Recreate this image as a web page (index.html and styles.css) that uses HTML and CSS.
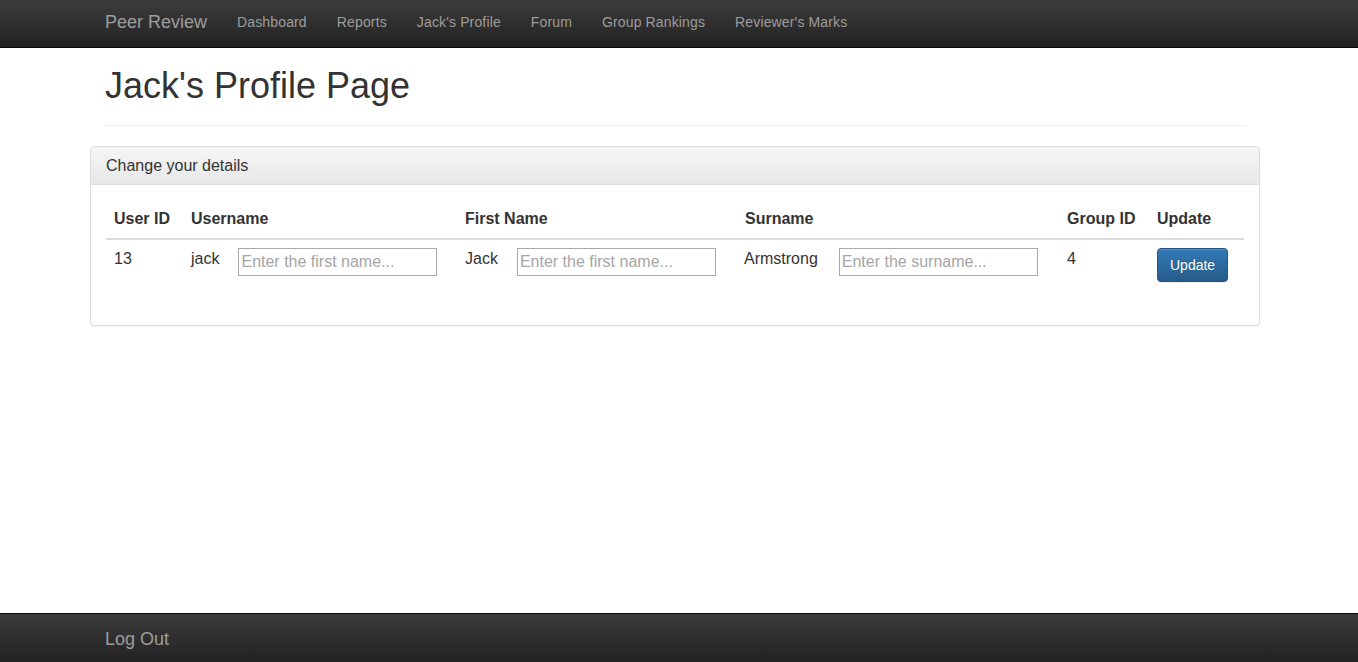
FILE: index.html
```html
<!DOCTYPE html>
<html lang="en">
<head>
<meta charset="utf-8">
<title>Jack's Profile Page</title>
<link rel="stylesheet" href="styles.css">
</head>
<body>
<nav class="navbar">
  <div class="nav-inner">
    <a class="brand" href="#">Peer Review</a>
    <ul class="nav-links">
      <li><a href="#">Dashboard</a></li>
      <li><a href="#">Reports</a></li>
      <li><a href="#">Jack's Profile</a></li>
      <li><a href="#">Forum</a></li>
      <li><a href="#">Group Rankings</a></li>
      <li><a href="#">Reviewer's Marks</a></li>
    </ul>
  </div>
</nav>

<main class="container">
  <div class="page-header">
    <h1>Jack's Profile Page</h1>
  </div>

  <section class="panel">
    <div class="panel-heading">Change your details</div>
    <div class="panel-body">
      <table class="table">
        <colgroup>
          <col class="c-id">
          <col class="c-user">
          <col class="c-first">
          <col class="c-sur">
          <col class="c-group">
          <col class="c-upd">
        </colgroup>
        <thead>
          <tr>
            <th>User ID</th>
            <th>Username</th>
            <th>First Name</th>
            <th>Surname</th>
            <th>Group ID</th>
            <th>Update</th>
          </tr>
        </thead>
        <tbody>
          <tr>
            <td>13</td>
            <td><div class="cell-row"><span class="lbl">jack</span><input class="field" type="text" placeholder="Enter the first name..."></div></td>
            <td><div class="cell-row"><span class="lbl">Jack</span><input class="field" type="text" placeholder="Enter the first name..."></div></td>
            <td class="td-sur"><div class="cell-row"><span class="lbl lbl-wide">Armstrong</span><input class="field" type="text" placeholder="Enter the surname..."></div></td>
            <td>4</td>
            <td><button class="btn-primary" type="button">Update</button></td>
          </tr>
        </tbody>
      </table>
    </div>
  </section>
</main>

<footer class="footer">
  <div class="nav-inner">
    <a class="brand footer-brand" href="#">Log Out</a>
  </div>
</footer>
</body>
</html>
```

FILE: styles.css
```css
* { box-sizing: border-box; }

html, body { height: 100%; }

body {
  margin: 0;
  min-height: 100vh;
  display: flex;
  flex-direction: column;
  font-family: "Liberation Sans", Arial, Helvetica, sans-serif;
  font-size: 14px;
  line-height: 20px;
  color: #333;
  background: #fff;
}

a { text-decoration: none; }

/* ---------- navbar ---------- */
.navbar {
  height: 48px;
  background-image: linear-gradient(to bottom, #3c3c3c 0%, #222 100%);
  border-bottom: 1px solid #080808;
  flex: none;
}

.nav-inner {
  width: 1170px;
  margin-left: 90px;
  padding: 0 15px;
  display: flex;
  align-items: flex-start;
}

.brand {
  color: #9d9d9d;
  font-size: 18px;
  line-height: 20px;
  padding: 12px 15px 0 0;
}

.nav-links {
  list-style: none;
  margin: 0;
  padding: 0;
  display: flex;
}

.nav-links a {
  display: block;
  color: #9d9d9d;
  padding: 12px 15px 0;
  line-height: 20px;
  letter-spacing: 0.14px;
}

/* ---------- content ---------- */
.container {
  width: 1170px;
  margin-left: 90px;
}

.page-header {
  margin: 18px 15px 20px;
  padding-bottom: 9px;
  border-bottom: 1px solid #eee;
}

.page-header h1 {
  margin: 0 0 10px;
  font-size: 36px;
  line-height: 1.1;
  font-weight: 500;
  color: #333;
}

.panel {
  border: 1px solid #ddd;
  border-radius: 4px;
  box-shadow: 0 1px 2px rgba(0, 0, 0, .05);
  background: #fff;
}

.panel-heading {
  padding: 10px 15px;
  font-size: 16px;
  line-height: 17.6px;
  color: #333;
  background-image: linear-gradient(to bottom, #f5f5f5 0%, #e8e8e8 100%);
  border-bottom: 1px solid #ddd;
  border-radius: 3px 3px 0 0;
}

.panel-body {
  padding: 15px;
}

.table {
  width: 1138px;
  table-layout: fixed;
  border-collapse: collapse;
  border-spacing: 0;
  margin-bottom: 20px;
  font-size: 16px;
  line-height: 22px;
}

.c-id { width: 77px; }
.c-user { width: 274px; }
.c-first { width: 280px; }
.c-sur { width: 322px; }
.c-group { width: 90px; }
.c-upd { width: 95px; }

.table th {
  text-align: left;
  font-weight: bold;
  vertical-align: bottom;
  padding: 8px;
  border-bottom: 2px solid #ddd;
  white-space: nowrap;
}

.table td {
  vertical-align: top;
  padding: 8px;
  white-space: nowrap;
}

.table td.td-sur { padding-left: 7px; }

.cell-row {
  display: flex;
  align-items: flex-start;
}

.lbl { margin-right: 19px; }
.lbl-wide { margin-right: 21px; }

.field {
  width: 199px;
  height: 28px;
  padding: 1px 2px;
  border: 1px solid #a9a9a9;
  border-radius: 0;
  font-family: "Liberation Sans", Arial, Helvetica, sans-serif;
  font-size: 16px;
  color: #333;
  background: #fff;
  outline: none;
}

.field::placeholder { color: #a6a6a6; }

.btn-primary {
  display: inline-block;
  height: 34px;
  padding: 6px 12px;
  font-family: "Liberation Sans", Arial, Helvetica, sans-serif;
  font-size: 14px;
  line-height: 20px;
  color: #fff;
  background-image: linear-gradient(to bottom, #337ab7 0%, #265a88 100%);
  border: 1px solid #245580;
  border-radius: 4px;
  text-shadow: 0 -1px 0 rgba(0, 0, 0, .2);
  box-shadow: inset 0 1px 0 rgba(255, 255, 255, .15), 0 1px 1px rgba(0, 0, 0, .075);
  cursor: pointer;
}

/* ---------- footer ---------- */
.footer {
  margin-top: auto;
  height: 49px;
  flex: none;
  border-top: 1px solid #080808;
  background-image: linear-gradient(to bottom, #3c3c3c 0%, #222 100%);
}

.footer-brand {
  padding-top: 15px;
}
```
